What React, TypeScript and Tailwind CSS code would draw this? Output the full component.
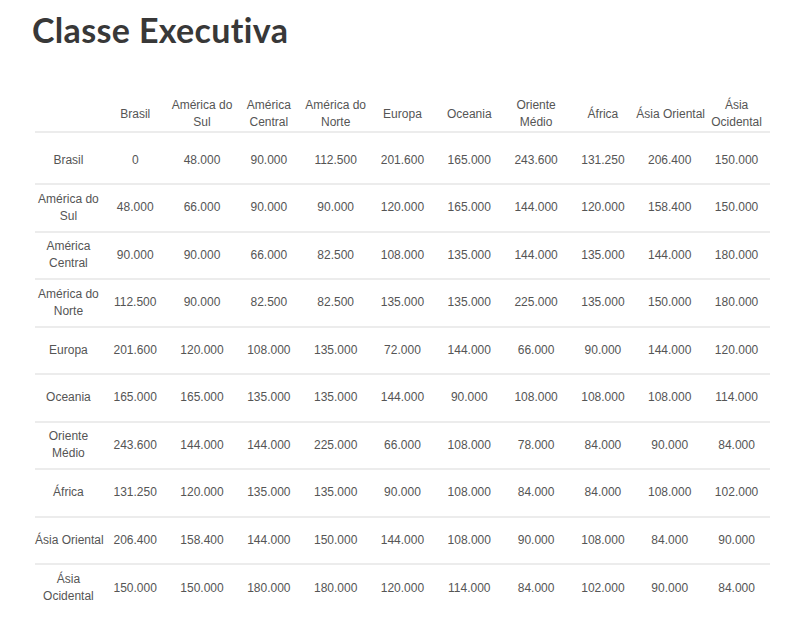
import React from 'react';

const regions = [
  'Brasil',
  'América do Sul',
  'América Central',
  'América do Norte',
  'Europa',
  'Oceania',
  'Oriente Médio',
  'África',
  'Ásia Oriental',
  'Ásia Ocidental',
];

const values = [
  ['0', '48.000', '90.000', '112.500', '201.600', '165.000', '243.600', '131.250', '206.400', '150.000'],
  ['48.000', '66.000', '90.000', '90.000', '120.000', '165.000', '144.000', '120.000', '158.400', '150.000'],
  ['90.000', '90.000', '66.000', '82.500', '108.000', '135.000', '144.000', '135.000', '144.000', '180.000'],
  ['112.500', '90.000', '82.500', '82.500', '135.000', '135.000', '225.000', '135.000', '150.000', '180.000'],
  ['201.600', '120.000', '108.000', '135.000', '72.000', '144.000', '66.000', '90.000', '144.000', '120.000'],
  ['165.000', '165.000', '135.000', '135.000', '144.000', '90.000', '108.000', '108.000', '108.000', '114.000'],
  ['243.600', '144.000', '144.000', '225.000', '66.000', '108.000', '78.000', '84.000', '90.000', '84.000'],
  ['131.250', '120.000', '135.000', '135.000', '90.000', '108.000', '84.000', '84.000', '108.000', '102.000'],
  ['206.400', '158.400', '144.000', '150.000', '144.000', '108.000', '90.000', '108.000', '84.000', '90.000'],
  ['150.000', '150.000', '180.000', '180.000', '120.000', '114.000', '84.000', '102.000', '90.000', '84.000'],
];

const App = () => {
  return (
    <div className="bg-white min-h-screen w-[800px] h-[637px] overflow-hidden">
      <h1 className="pl-[32px] pt-[10px] text-[34px] leading-[40px] font-bold tracking-[0.01em] text-[#383838] font-['Lato',sans-serif]">
        Classe Executiva
      </h1>

      <table className="ml-[35px] mt-[43px] w-[735px] table-fixed border-collapse text-[12px] leading-[17px] text-[#555] font-['Liberation_Sans',Arial,sans-serif]">
        <thead>
          <tr className="h-[39px] border-b-2 border-[#ececec]">
            <th className="font-normal"></th>
            {regions.map((r, index) => (
              <th
                key={index}
                className={`font-normal text-center align-middle px-0 pt-[4px] ${r === 'Ásia Oriental' ? 'whitespace-nowrap' : ''}`}
              >
                {r}
              </th>
            ))}
          </tr>
        </thead>
        <tbody>
          {values.map((row, i) => (
            <tr
              key={i}
              className={`${i === 0 ? 'h-[52px]' : 'h-[47.5px]'} ${i < values.length - 1 ? 'border-b-2 border-[#ececec]' : ''}`}
            >
              <td
                className={`text-center align-middle px-0 ${i === 0 ? 'pt-[5px]' : ''} ${regions[i] === 'Ásia Oriental' ? 'whitespace-nowrap' : ''}`}
              >
                {regions[i]}
              </td>
              {row.map((v, j) => (
                <td key={j} className={`text-center align-middle px-0 ${i === 0 ? 'pt-[5px]' : ''}`}>
                  {v}
                </td>
              ))}
            </tr>
          ))}
        </tbody>
      </table>
    </div>
  );
};

export default App;
